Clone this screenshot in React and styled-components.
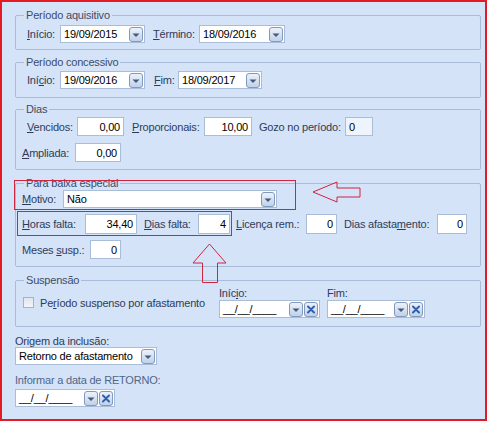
import React from 'react';
import styled, { createGlobalStyle } from 'styled-components';

const GlobalStyle = createGlobalStyle`
  body {
    margin: 0;
    font-family: "Liberation Sans", Arial, sans-serif;
    font-size: 11px;
    letter-spacing: -0.2px;
  }
`;

const Window = styled.div`
  position: relative;
  box-sizing: border-box;
  width: 487px;
  height: 421px;
  border: 2px solid #e31b24;
  background: #d5e3f8;
  padding: 7px 4px 0 13px;
  display: flex;
  flex-direction: column;
`;

const Group = styled.fieldset`
  margin: ${(p) => p.$mt || 0}px 0 0 0;
  padding: ${(p) => p.$pt}px 0 ${(p) => p.$pb}px 0;
  border: 1px solid #a8bcd8;
  border-radius: 2px;
  min-width: 0;
  display: flex;
  flex-direction: column;
  gap: ${(p) => p.$gap || 0}px;
`;

const Legend = styled.legend`
  margin-left: 8px;
  padding: 0 2px;
  line-height: 12px;
  color: #3c4c68;
`;

const Row = styled.div`
  display: flex;
  align-items: center;
  margin-left: ${(p) => p.$ml || 0}px;
`;

const Label = styled.span`
  flex: none;
  width: ${(p) => p.$w}px;
  margin-left: ${(p) => p.$ml || 0}px;
  line-height: 12px;
  color: ${(p) => (p.$muted ? '#4f6689' : '#2e3c58')};
  white-space: nowrap;
`;

const Field = styled.div`
  flex: none;
  box-sizing: border-box;
  width: ${(p) => p.$w}px;
  height: ${(p) => p.$h || 19}px;
  border: 1px solid #a9bdd8;
  background: ${(p) => (p.$soft ? '#eef4fc' : '#fff')};
  display: flex;
  align-items: center;
  justify-content: ${(p) => (p.$right ? 'flex-end' : 'flex-start')};
  padding: 0 3px;
  color: #000;
  line-height: 12px;
`;

const PickBox = styled.div`
  flex: none;
  box-sizing: border-box;
  width: ${(p) => p.$w}px;
  height: 18px;
  border: 1px solid #a9bdd8;
  background: #fff;
  display: flex;
  align-items: center;
  padding-right: 1px;
  gap: 1px;
`;

const PickText = styled.span`
  flex: 1;
  padding-left: 3px;
  color: #000;
  line-height: 12px;
  white-space: nowrap;
`;

const Column = styled.div`
  flex: none;
  display: flex;
  flex-direction: column;
  gap: 1px;
  margin-left: ${(p) => p.$ml || 0}px;
`;

const Check = styled.span`
  flex: none;
  box-sizing: border-box;
  width: 11px;
  height: 11px;
  border: 1px solid #a3b4ca;
  background: linear-gradient(#dfe5ee, #f3f5f9);
`;

const Stack = styled.div`
  display: flex;
  flex-direction: column;
  gap: ${(p) => p.$gap}px;
  margin-top: ${(p) => p.$mt}px;
`;

const Overlay = styled.svg`
  position: absolute;
  left: -2px;
  top: -2px;
  pointer-events: none;
`;

const Mn = ({ t }) => {
  const i = t.indexOf('&');
  if (i < 0) return t;
  return (
    <>
      {t.slice(0, i)}
      <u>{t[i + 1]}</u>
      {t.slice(i + 2)}
    </>
  );
};

const DropBtn = () => (
  <svg width="14" height="15" viewBox="0 0 14 15">
    <defs>
      <linearGradient id="db" x1="0" y1="0" x2="0" y2="1">
        <stop offset="0" stopColor="#eef3fb" />
        <stop offset="1" stopColor="#bfd0e8" />
      </linearGradient>
    </defs>
    <rect x="0.5" y="0.5" width="13" height="14" rx="2.5" fill="url(#db)" stroke="#8199bf" />
    <path d="M3.5 6.5h7l-3.5 3.5z" fill="#45597c" />
  </svg>
);

const ClearBtn = () => (
  <svg width="14" height="15" viewBox="0 0 14 15">
    <rect x="0.5" y="0.5" width="13" height="14" rx="2.5" fill="url(#db)" stroke="#8199bf" />
    <path d="M4 4.5l6 6M10 4.5l-6 6" stroke="#2d5fb3" strokeWidth="2" strokeLinecap="round" />
  </svg>
);

const Picker = ({ w, value, clear }) => (
  <PickBox $w={w}>
    <PickText>{value}</PickText>
    <DropBtn />
    {clear && <ClearBtn />}
  </PickBox>
);

const red = '#cf2540';

export default function App() {
  return (
    <>
      <GlobalStyle />
      <Window>
        <Group $pt={4} $pb={6}>
          <Legend>Período aquisitivo</Legend>
          <Row $ml={11}>
            <Label $w={33}><Mn t="&Início:" /></Label>
            <Picker w={85} value="19/09/2015" />
            <Label $w={46} $ml={8}><Mn t="&Término:" /></Label>
            <Picker w={86} value="18/09/2016" />
          </Row>
        </Group>

        <Group $mt={6} $pt={3} $pb={8}>
          <Legend>Período concessivo</Legend>
          <Row $ml={11}>
            <Label $w={33}><Mn t="Iní&cio:" /></Label>
            <Picker w={85} value="19/09/2016" />
            <Label $w={24} $ml={9}><Mn t="&Fim:" /></Label>
            <Picker w={84} value="18/09/2017" />
          </Row>
        </Group>

        <Group $mt={5} $pt={2} $pb={7} $gap={7}>
          <Legend>Dias</Legend>
          <Row $ml={11}>
            <Label $w={50}><Mn t="&Vencidos:" /></Label>
            <Field $w={47} $right>0,00</Field>
            <Label $w={72} $ml={8}><Mn t="&Proporcionais:" /></Label>
            <Field $w={48} $right>10,00</Field>
            <Label $w={86} $ml={7}>Gozo no período:</Label>
            <Field $w={28} $soft>0</Field>
          </Row>
          <Row $ml={6}>
            <Label $w={53}><Mn t="&Ampliada:" /></Label>
            <Field $w={46} $right>0,00</Field>
          </Row>
        </Group>

        <Group $mt={7} $pt={1} $pb={7} $gap={6}>
          <Legend>Para baixa especial</Legend>
          <Row $ml={6}>
            <Label $w={41}><Mn t="&Motivo:" /></Label>
            <Picker w={214} value="Não" />
          </Row>
          <Row $ml={6}>
            <Label $w={63}><Mn t="&Horas falta:" /></Label>
            <Field $w={52} $h={20} $right>34,40</Field>
            <Label $w={54} $ml={7}><Mn t="&Dias falta:" /></Label>
            <Field $w={32} $h={20} $right>4</Field>
            <Label $w={70} $ml={6}><Mn t="&Licença rem.:" /></Label>
            <Field $w={31} $h={20} $right>0</Field>
            <Label $w={93} $ml={7}><Mn t="Dias afasta&mento:" /></Label>
            <Field $w={30} $h={20} $right>0</Field>
          </Row>
          <Row $ml={6}>
            <Label $w={68}><Mn t="Meses &susp.:" /></Label>
            <Field $w={31} $right>0</Field>
          </Row>
        </Group>

        <Group $mt={7} $pt={1} $pb={8}>
          <Legend>Suspensão</Legend>
          <Row $ml={7}>
            <Check />
            <Label $w={179} $ml={6}><Mn t="Pe&ríodo suspenso por afastamento" /></Label>
            <Column>
              <Label><Mn t="Iníc&io:" /></Label>
              <Picker w={101} value="__/__/____" clear />
            </Column>
            <Column $ml={7}>
              <Label>Fim:</Label>
              <Picker w={98} value="__/__/____" clear />
            </Column>
          </Row>
        </Group>

        <Stack $gap={0} $mt={8}>
          <Label>Origem da inclusão:</Label>
          <Picker w={142} value="Retorno de afastamento" />
        </Stack>

        <Stack $gap={3} $mt={9}>
          <Label $muted>Informar a data de RETORNO:</Label>
          <Picker w={100} value="__/__/____" clear />
        </Stack>

        <Overlay width="487" height="421" viewBox="0 0 487 421">
          <rect x="14.5" y="180.5" width="281" height="29" fill="none" stroke={red} />
          <rect x="17.5" y="211.5" width="214" height="24" fill="none" stroke={red} />
          <polygon
            points="313,192 337,182 337,188 360,188 360,197 337,197 337,202"
            fill="none"
            stroke={red}
          />
          <polygon
            points="209.5,244 226,263 217.5,263 217.5,282.5 202.5,282.5 202.5,263 193,263"
            fill="none"
            stroke={red}
          />
        </Overlay>
      </Window>
    </>
  );
}
